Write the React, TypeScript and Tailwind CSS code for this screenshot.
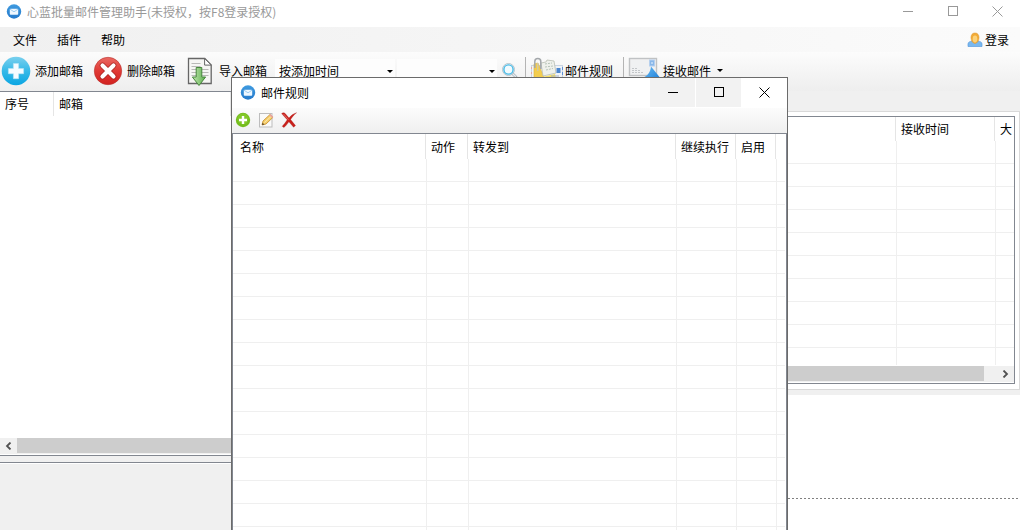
import React, { useState } from 'react';

interface Column {
  label: string;
  width: string;
  pad?: string;
}

const mailboxColumns: Column[] = [
  { label: '序号', width: 'w-[55px]', pad: 'pl-[5px]' },
  { label: '邮箱', width: 'w-[177px]' },
  { label: '', width: '' },
];

const messageColumns: Column[] = [
  { label: '', width: '' },
  { label: '接收时间', width: 'w-[99px]' },
  { label: '大', width: 'w-[18px]' },
];

const ruleColumns: Column[] = [
  { label: '名称', width: 'w-[194px]', pad: 'pl-[7px]' },
  { label: '动作', width: 'w-[42px]' },
  { label: '转发到', width: 'w-[208px]' },
  { label: '继续执行', width: 'w-[60px]' },
  { label: '启用', width: 'w-[40px]' },
  { label: '', width: '' },
];

const GridTable: React.FC<{ columns: Column[]; rows: number; label: string; head: string }> = ({ columns, rows, label, head }) => (
  <table aria-label={label} className="w-full table-fixed border-separate border-spacing-0">
    <thead>
      <tr>
        {columns.map((col, i) => (
          <th key={i} scope="col" className={`p-0 text-left font-normal ${col.width}`}>
            <div
              className={`mr-px flex items-center overflow-hidden whitespace-nowrap ${head} ${col.pad ?? 'pl-1'} ${
                i < columns.length - 1 ? 'border-r border-[#e5e5e5]' : ''
              }`}
            >
              {col.label}
            </div>
          </th>
        ))}
      </tr>
    </thead>
    <tbody>
      {Array.from({ length: rows }, (_, r) => (
        <tr key={r}>
          {columns.map((_, i) => (
            <td
              key={i}
              className={`h-[23px] border-b border-[#efefef] p-0 ${i < columns.length - 1 ? 'border-r' : ''}`}
            />
          ))}
        </tr>
      ))}
    </tbody>
  </table>
);

const AppIcon: React.FC = () => (
  <svg viewBox="0 0 16 16" className="size-4 shrink-0">
    <defs>
      <linearGradient id="appBlue" x1="0" y1="0" x2="0" y2="1">
        <stop offset="0" stopColor="#3f9be0" />
        <stop offset="1" stopColor="#2479cb" />
      </linearGradient>
    </defs>
    <circle cx="8" cy="7.5" r="7.2" fill="url(#appBlue)" />
    <rect x="3.8" y="4.8" width="8.4" height="6" rx=".8" fill="#eef7ff" />
    <path d="M4 5.2 8 7.8l4-2.6" fill="none" stroke="#8cc3ee" strokeWidth=".8" />
  </svg>
);

const AddIcon: React.FC = () => (
  <svg viewBox="0 0 30 30" className="size-[30px]">
    <defs>
      <linearGradient id="addBlue" x1="0" y1="0" x2="0" y2="1">
        <stop offset="0" stopColor="#7ad0ee" />
        <stop offset=".5" stopColor="#35b9e8" />
        <stop offset="1" stopColor="#0aa5e2" />
      </linearGradient>
    </defs>
    <circle cx="15" cy="15" r="14.3" fill="url(#addBlue)" />
    <path d="M12.4 7.5h5.2v5h5v5.2h-5v5h-5.2v-5h-5v-5.2h5z" fill="#f4fbff" stroke="#b9e4f5" strokeWidth=".6" />
  </svg>
);

const RemoveIcon: React.FC = () => (
  <svg viewBox="0 0 30 30" className="size-[30px]">
    <defs>
      <linearGradient id="removeRed" x1="0" y1="0" x2="0" y2="1">
        <stop offset="0" stopColor="#ea6a63" />
        <stop offset=".5" stopColor="#e03a35" />
        <stop offset="1" stopColor="#d2211f" />
      </linearGradient>
    </defs>
    <circle cx="15" cy="15" r="13.7" fill="url(#removeRed)" stroke="#b9302d" strokeWidth=".6" />
    <path d="m9.5 9.500 11 11m0-11-11 11" stroke="#a82420" strokeWidth="5.6" strokeLinecap="round" />
    <path d="m9.5 9.500 11 11m0-11-11 11" stroke="#fff" strokeWidth="4.2" strokeLinecap="round" />
  </svg>
);

const ImportIcon: React.FC = () => (
  <svg viewBox="0 0 26 30" className="h-[30px] w-[26px]">
    <defs>
      <linearGradient id="importGreen" x1="0" y1="0" x2="1" y2="0">
        <stop offset="0" stopColor="#c0e6ae" />
        <stop offset="1" stopColor="#5db04e" />
      </linearGradient>
    </defs>
    <path d="M1.5 2.5h16.3l6.4 6.4v18.6H1.5z" fill="#f6f6f4" stroke="#666" strokeWidth="1.3" />
    <path d="M17.6 2.5v6.6h6.6z" fill="#fff" stroke="#666" />
    <path d="M4.5 7.500h9M4.5 10.500h9M4.500 13.500h17M4.500 16.500h17M4.500 19.500h17" stroke="#b9b9b7" />
    <path d="M9.2 11.5h5.6v9.500h3.8L12 29.500 5.400 21h3.800z" fill="url(#importGreen)" stroke="#47863c" />
  </svg>
);

const SearchIcon: React.FC = () => (
  <svg viewBox="0 0 17 17" className="size-[17px]">
    <path d="m11.4 11.6 3.6 3.4" stroke="#aab6be" strokeWidth="2.8" strokeLinecap="round" />
    <path d="m11.8 12 3 2.800" stroke="#e8ecef" strokeWidth="1.2" />
    <circle cx="7.500" cy="7.500" r="6" fill="#eefafe" stroke="#b5c3cb" />
    <circle cx="7.500" cy="7.500" r="4.6" fill="#f0fbff" stroke="#45b9e6" strokeWidth="1.4" />
  </svg>
);

const RulesIcon: React.FC = () => (
  <svg viewBox="0 0 34 30" className="h-[30px] w-[34px]">
    <rect x="1.5" y="9.500" width="31" height="17" fill="#f0f3f7" stroke="#c9d4e2" />
    <path d="M1.5 11v14" stroke="#e5a8a2" strokeDasharray="2 3" />
    <path d="M32.5 11v14" stroke="#5f92d6" strokeDasharray="3 2" />
    <path d="m4 8 4-1 8 19H4z" fill="#f3cd4e" stroke="#dbb33d" strokeWidth=".6" />
    <path d="m8 22 17-4 2 9H8z" fill="#f6dd60" />
    <path d="m11 7 5-1 1-2 7 1 2 12-13 3z" fill="#eff1ec" stroke="#b9beb2" strokeWidth=".8" />
    <path d="m15 8 7-1M15 11l8-1M16 14l7-1.500" stroke="#b7c4b9" strokeDasharray="2 1" />
    <path d="M4.800 12V5.500a3 3 0 0 1 6 0V13" fill="none" stroke="#a3a7aa" strokeWidth="1.500" />
    <path d="M7.800 15V7" stroke="#c3c6c8" />
    <rect x="26.500" y="12" width="4" height="5" fill="#4a86cf" />
    <path d="M21 20h8" stroke="#a5b2c4" />
  </svg>
);

const ReceiveIcon: React.FC = () => (
  <svg viewBox="0 0 32 30" className="h-[30px] w-8">
    <defs>
      <linearGradient id="arrowBlue" x1="0" y1="0" x2="1" y2="1">
        <stop offset="0" stopColor="#6cbef6" />
        <stop offset="1" stopColor="#1577d3" />
      </linearGradient>
    </defs>
    <rect x="1.5" y="2.500" width="27" height="17" fill="#f0f1f2" stroke="#c0c2c4" strokeWidth="1.4" />
    <rect x="21.5" y="4" width="5" height="6" fill="#8ab8ea" stroke="#b6d0ee" />
    <path d="M23 7h2" stroke="#eaf3fc" />
    <path d="M4 12.500h5M4 14.500h8M4 16.500h11" stroke="#c3c6c9" strokeDasharray="2 1" />
    <path d="m23 10.500 8.500 10.500h-4.500v6h-8v-5.500h-4c3.500-1 7.500-4.500 8-11z" fill="url(#arrowBlue)" />
  </svg>
);

const UserIcon: React.FC = () => (
  <svg viewBox="0 0 16 16" className="size-4">
    <path d="M1 14.500V12c0-2 2-2.500 4-3h6c2 .5 4 1 4 3v2.500z" fill="#79b8ef" stroke="#5b9bdc" strokeWidth=".7" />
    <path d="M8 1c2.700 0 4 2 4 4.600S10.300 11.500 8 11.500 4 8.200 4 5.600 5.300 1 8 1z" fill="#f3ab35" stroke="#dd9a35" strokeWidth=".6" />
    <ellipse cx="8" cy="7" rx="2.300" ry="3.400" fill="#fbd27a" />
  </svg>
);

const GreenPlusIcon: React.FC = () => (
  <svg viewBox="0 0 16 16" className="size-4">
    <circle cx="8" cy="8" r="7.200" fill="#74bd1d" />
    <circle cx="8" cy="6.800" r="5.600" fill="#8fd133" opacity=".5" />
    <path d="M8 4v8M4 8h8" stroke="#fff" strokeWidth="2.400" />
  </svg>
);

const EditIcon: React.FC = () => (
  <svg viewBox="0 0 16 16" className="size-4">
    <rect x="1.500" y="1.500" width="12.500" height="13.500" fill="#fafafa" stroke="#bdbdbd" />
    <path d="m4 13 1-4 7-6.500 3 2.800L8 12z" fill="#f6cf6a" stroke="#c48a2b" strokeWidth=".8" />
    <path d="m6.500 10.500 6.500-6" stroke="#fbe7ae" />
    <path d="m11.300 3.200 1.200-1.100 2.900 2.800-1.200 1.100z" fill="#e9a4a0" />
    <path d="m4 13 .6-2.200 1.800 1.600z" fill="#54442c" />
  </svg>
);

const RedCrossIcon: React.FC = () => (
  <svg viewBox="0 0 16 16" className="size-4">
    <path d="M.6 1.600C1.800.5 3.200.4 4.200 1.600L8 6c2-2.400 4-4.300 7.600-5.300C13 2.800 11.200 4.900 9.600 7.600l4.900 6-1.900 1.600-4.700-5.400C6.300 12 5 14 2.800 15.500L1.200 14.300C3 12.500 4.700 10.200 6.200 7.800z" fill="#c8201b" stroke="#a81612" strokeWidth=".3" />
    <path d="m2.500 2 5 5.800" stroke="#e4736d" strokeWidth=".8" />
  </svg>
);

const MinimizeIcon = () => (
  <svg viewBox="0 0 11 11" className="size-[11px]" shapeRendering="crispEdges">
    <path d="M.5 5.500h10" stroke="currentColor" />
  </svg>
);

const MaximizeIcon = () => (
  <svg viewBox="0 0 11 11" className="size-[11px]" shapeRendering="crispEdges">
    <rect x="1" y=".5" width="9" height="9" fill="none" stroke="currentColor" />
  </svg>
);

const CloseIcon = () => (
  <svg viewBox="0 0 11 11" className="size-[11px]">
    <path d="m.5.5 10 10m0-10-10 10" stroke="currentColor" />
  </svg>
);

const Caret: React.FC<{ className?: string }> = ({ className = '' }) => (
  <svg viewBox="0 0 6 3" className={`h-[3px] w-[6px] ${className}`}>
    <path d="M0 0h6L3 3z" fill="#000" />
  </svg>
);

const Chevron: React.FC<{ left?: boolean }> = ({ left }) => (
  <svg viewBox="0 0 7 8" className="h-2 w-[7px]">
    <path d={left ? 'M5.500.5 2 4l3.500 3.500' : 'M1.500.5 5 4 1.500 7.500'} fill="none" stroke="#505050" strokeWidth="1.800" />
  </svg>
);

const ToolSelect: React.FC<{ label: string; options: string[]; width: string }> = ({ label, options, width }) => {
  const [value, setValue] = useState(options[0]);

  return (
    <div className={`relative h-6 shrink-0 bg-[#fdfdfd] ${width}`}>
      <select
        aria-label={label}
        value={value}
        onChange={(e) => setValue(e.target.value)}
        className="h-full w-full appearance-none bg-transparent pl-1 outline-none"
      >
        {options.map((option) => (
          <option key={option} value={option}>{option}</option>
        ))}
      </select>
      <Caret className="pointer-events-none absolute right-[2px] top-[11px]" />
    </div>
  );
};

const RulesDialog: React.FC = () => (
  <section
    role="dialog"
    aria-labelledby="rules-title"
    className="absolute bottom-0 left-[231px] top-[77px] flex w-[557px] flex-col overflow-hidden border border-b-0 border-[#6b6b6b] bg-white"
  >
    <header className="flex h-[30px] shrink-0 items-start justify-between pl-2">
      <div className="flex h-[29px] items-center gap-[5px]">
        <AppIcon />
        <h2 id="rules-title">邮件规则</h2>
      </div>
      <div className="flex gap-px text-black">
        <button aria-label="最小化" className="flex h-[29px] w-[45px] items-center justify-center bg-[#f2f2f2]"><MinimizeIcon /></button>
        <button aria-label="最大化" className="flex h-[29px] w-[45px] items-center justify-center bg-[#f2f2f2]"><MaximizeIcon /></button>
        <button aria-label="关闭" className="flex h-[29px] w-[45px] items-center justify-center"><CloseIcon /></button>
      </div>
    </header>
    <div className="flex h-[25px] shrink-0 items-center gap-[7px] bg-linear-to-b from-[#fcfcfc] to-[#efefef] pb-px pl-[3px]">
      <button aria-label="添加规则"><GreenPlusIcon /></button>
      <button aria-label="编辑规则"><EditIcon /></button>
      <button aria-label="删除规则"><RedCrossIcon /></button>
    </div>
    <div className="min-h-0 flex-1 overflow-hidden border-x border-t border-[#828790] pr-px">
      <GridTable label="邮件规则" columns={ruleColumns} rows={17} head="h-[25px] pt-px" />
    </div>
  </section>
);

const App: React.FC = () => {
  const menus = ['文件', '插件', '帮助'];

  return (
    <div className="relative flex h-screen flex-col overflow-hidden bg-[#f0f0f0] font-['Noto_Sans_CJK_SC',sans-serif] text-[12px] leading-4 text-black">
      {/* Title bar */}
      <header className="flex h-[27px] shrink-0 items-start justify-between bg-white pl-[6px]">
        <div className="flex h-[23px] items-center gap-[5px] text-[#999]">
          <AppIcon />
          <h1>心蓝批量邮件管理助手(未授权，按F8登录授权)</h1>
        </div>
        <div className="flex text-[#999]">
          <button aria-label="最小化" className="flex h-[23px] w-[45px] items-center justify-center"><MinimizeIcon /></button>
          <button aria-label="最大化" className="flex h-[23px] w-[45px] items-center justify-center"><MaximizeIcon /></button>
          <button aria-label="关闭" className="flex h-[23px] w-[45px] items-center justify-center"><CloseIcon /></button>
        </div>
      </header>

      {/* Menu */}
      <nav className="flex h-[25px] shrink-0 items-center justify-between bg-linear-to-r from-[#f0f0f0] to-[#fbfbfb] pl-[13px] pr-[11px]">
        <div className="flex gap-5">
          {menus.map((menu) => (
            <button key={menu}>{menu}</button>
          ))}
        </div>
        <button className="flex items-center gap-[2px]">
          <UserIcon />
          登录
        </button>
      </nav>

      {/* Toolbar */}
      <div className="flex h-[39px] shrink-0 items-center bg-linear-to-b from-[#fcfcfc] to-[#eeeeee] pb-[2px] pl-px">
        <button className="flex shrink-0 items-center gap-1">
          <AddIcon />
          添加邮箱
        </button>
        <button className="ml-[10px] flex shrink-0 items-center gap-1">
          <RemoveIcon />
          删除邮箱
        </button>
        <button className="ml-3 flex shrink-0 items-center gap-[6px]">
          <ImportIcon />
          导入邮箱
        </button>
        <div className="ml-2 flex gap-[2px]">
          <ToolSelect label="排序" options={['按添加时间', '按邮箱名称']} width="w-[120px]" />
          <ToolSelect label="搜索" options={['']} width="w-[100px]" />
        </div>
        <button aria-label="搜索" className="ml-1"><SearchIcon /></button>
        <div className="ml-[7px] h-7 w-px bg-[#b4b4b4]" />
        <button className="ml-1 flex shrink-0 items-center gap-px">
          <RulesIcon />
          邮件规则
        </button>
        <div className="ml-[10px] h-7 w-px bg-[#b4b4b4]" />
        <button className="ml-1 flex shrink-0 items-center gap-[3px]">
          <ReceiveIcon />
          接收邮件
          <Caret className="ml-[3px]" />
        </button>
      </div>

      <main className="flex min-h-0 flex-1">
        {/* Mailboxes */}
        <div className="flex w-1/3 flex-col">
          <section className="flex min-h-0 flex-1 flex-col border-y border-[#828790] bg-white pb-px">
            <div className="min-h-0 flex-1 overflow-hidden">
              <GridTable label="邮箱列表" columns={mailboxColumns} rows={0} head="h-[24px]" />
            </div>
            <div className="flex h-4 bg-[#f0f0f0]">
              <button aria-label="向左滚动" className="flex w-[17px] items-center justify-center"><Chevron left /></button>
              <div className="h-[15px] flex-1 bg-[#cdcdcd]" />
            </div>
          </section>
          <div className="mt-[6px] h-[68px] shrink-0 border-t border-[#828790]">
            <div className="h-px bg-white" />
          </div>
        </div>

        {/* Messages */}
        <div className="flex flex-1 flex-col pt-5">
          <section className="flex min-h-0 flex-1 flex-col border border-[#d9d9d9] bg-white px-1 pb-[5px] pt-1">
            <div className="flex min-h-0 flex-1 flex-col border border-[#828790] pb-px">
              <div className="min-h-0 flex-1 overflow-hidden">
                <GridTable label="邮件列表" columns={messageColumns} rows={11} head="h-6" />
              </div>
              <div className="mt-px flex h-4 bg-[#f0f0f0]">
                <div className="h-[15px] flex-1 bg-[#cdcdcd]" />
                <button aria-label="向右滚动" className="ml-[13px] flex w-[17px] items-center justify-center"><Chevron /></button>
              </div>
            </div>
          </section>
          <section className="mt-[5px] h-[135px] shrink-0 bg-white pt-[103px]">
            <div className="h-px bg-[repeating-linear-gradient(90deg,#808080_0_2px,transparent_2px_4px)]" />
          </section>
        </div>
      </main>

      <RulesDialog />
    </div>
  );
};

export default App;
